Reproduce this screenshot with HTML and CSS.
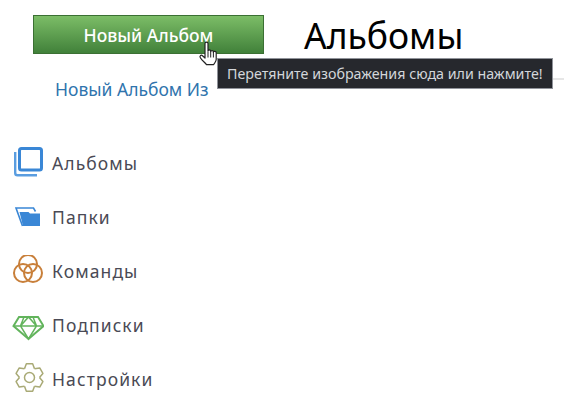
FILE: index.html
```html
<!DOCTYPE html>
<html lang="en">

<head>
    <meta charset="UTF-8">
    <meta name="viewport" content="width=device-width, initial-scale=1.0">
    <title>Альбомы</title>
    <link rel="stylesheet" href="styles.css">
</head>

<body>
    <div class="page">

        <!-- left column -->
        <div class="side">
            <div class="new-album">
                <button class="btn-new" type="button">Новый Альбом</button>

                <!-- hand cursor over the button -->
                <svg class="hand" width="22" height="27" viewBox="0 0 22 27">
                    <path d="M8 3.500c0-1.800 3-1.800 3 0V11c0-1.400 2.700-1.400 2.700 0v.6c0-1.300 2.700-1.300 2.700 0v.6c0-1.300 2.800-1.200 2.800.4v7c0 2-1.500 3-2.500 5H9.500C8 22.500 5.500 21 3.500 18c-1.500-2 .6-3.500 2-2.300L8 18z" fill="#fff" stroke="#222" stroke-width="1.200" stroke-linejoin="round"/>
                    <path d="M11 11.500v6M13.700 11.500v6M16.400 12v5.500" fill="none" stroke="#222" stroke-width="1"/>
                </svg>

                <div class="tooltip">Перетяните изображения сюда или нажмите!</div>
            </div>

            <a class="new-from" href="#">Новый Альбом Из</a>

            <!-- menu -->
            <ul class="menu">
                <li>
                    <svg width="32" height="32" viewBox="0 0 32 32" fill="none">
                        <rect x="7.500" y="1.500" width="22" height="21.500" rx="2" stroke="#3a87d6" stroke-width="3"/>
                        <path d="M3.200 5v21c0 1.500 .8 2.300 2.300 2.300H25" stroke="#5a9de0" stroke-width="2.400"/>
                    </svg>
                    <span>Альбомы</span>
                </li>
                <li>
                    <svg width="32" height="32" viewBox="0 0 32 32">
                        <path d="M10.500 25 4 7h17.500l2 3.500" fill="none" stroke="#3a87d6" stroke-width="1.600"/>
                        <path d="M7.500 11h9l1.500 1.500h10V25H11z" fill="#3a87d6"/>
                    </svg>
                    <span>Папки</span>
                </li>
                <li>
                    <svg width="32" height="32" viewBox="0 2 32 32" fill="none" stroke="#c87f3a" stroke-width="2">
                        <circle cx="16" cy="11" r="9"/>
                        <circle cx="11" cy="20" r="9"/>
                        <circle cx="21" cy="20" r="9"/>
                    </svg>
                    <span>Команды</span>
                </li>
                <li>
                    <svg width="32" height="32" viewBox="0 0 32 32" fill="none" stroke="#62b45c" stroke-width="2">
                        <path d="M1.500 17 7 8h19l5.500 9-15 13z"/>
                        <path d="M1.500 17h30M12 8 8.500 17l8 13 8-13L21 8M8.500 17l8-9 8 9" stroke-width="1.500"/>
                    </svg>
                    <span>Подписки</span>
                </li>
                <li>
                    <svg width="32" height="32" viewBox="0 0 32 32" fill="none" stroke="#a9aa76" stroke-width="1.500" stroke-linejoin="round">
                        <defs>
                            <path id="tooth" d="M-5-8.660-3.150-13.640H3.150L5-8.660"/>
                        </defs>
                        <g transform="translate(17.500 14.500)">
                            <circle r="5"/>
                            <use href="#tooth"/>
                            <use href="#tooth" transform="rotate(60)"/>
                            <use href="#tooth" transform="rotate(120)"/>
                            <use href="#tooth" transform="rotate(180)"/>
                            <use href="#tooth" transform="rotate(240)"/>
                            <use href="#tooth" transform="rotate(300)"/>
                        </g>
                    </svg>
                    <span>Настройки</span>
                </li>
            </ul>
        </div>

        <!-- main column -->
        <div class="main">
            <h1>Альбомы</h1>
            <hr>
        </div>

    </div>
</body>

</html>
```

FILE: styles.css
```css
body {
    margin: 0;
    background: #fff;
    font-family: 'Noto Sans', sans-serif;
    overflow: hidden;
}

.page {
    display: flex;
    height: 410px;
}

.side {
    width: 304px;
    flex: none;
}

.new-album {
    position: relative;
    margin: 15px 0 0 33px;
    width: 231px;
}

.btn-new {
    display: block;
    width: 100%;
    height: 39px;
    padding: 0;
    background: linear-gradient(#7cbd67, #41813a);
    border: 1px solid #3b7033;
    color: #fff;
    font-family: 'Noto Sans', sans-serif;
    font-size: 17.5px;
    font-weight: 500;
}

.hand {
    position: absolute;
    left: 164px;
    top: 25px;
}

.tooltip {
    position: absolute;
    left: 184px;
    top: 43px;
    padding: 0 9px;
    line-height: 29px;
    white-space: nowrap;
    background: #26282d;
    border: 1px solid #90939a;
    color: #d3d6da;
    font-size: 14.25px;
}

.new-from {
    display: block;
    margin: 25px 0 0 55px;
    color: #2f74ad;
    font-size: 17.5px;
    line-height: 20px;
    text-decoration: none;
}

.menu {
    list-style: none;
    margin: 37px 0 0 12px;
    padding: 0;
}

.menu li {
    display: flex;
    align-items: center;
    gap: 8px;
    height: 54px;
    color: #4a4a55;
    font-size: 17.5px;
    letter-spacing: 1.1px;
}

.main {
    flex: 1;
}

h1 {
    margin: 11px 0 0;
    color: #000;
    font-size: 35.5px;
    font-weight: 400;
    line-height: 48px;
}

hr {
    margin: 19px 0 0;
    border: none;
    border-top: 2px solid #e6e6e6;
}
```
